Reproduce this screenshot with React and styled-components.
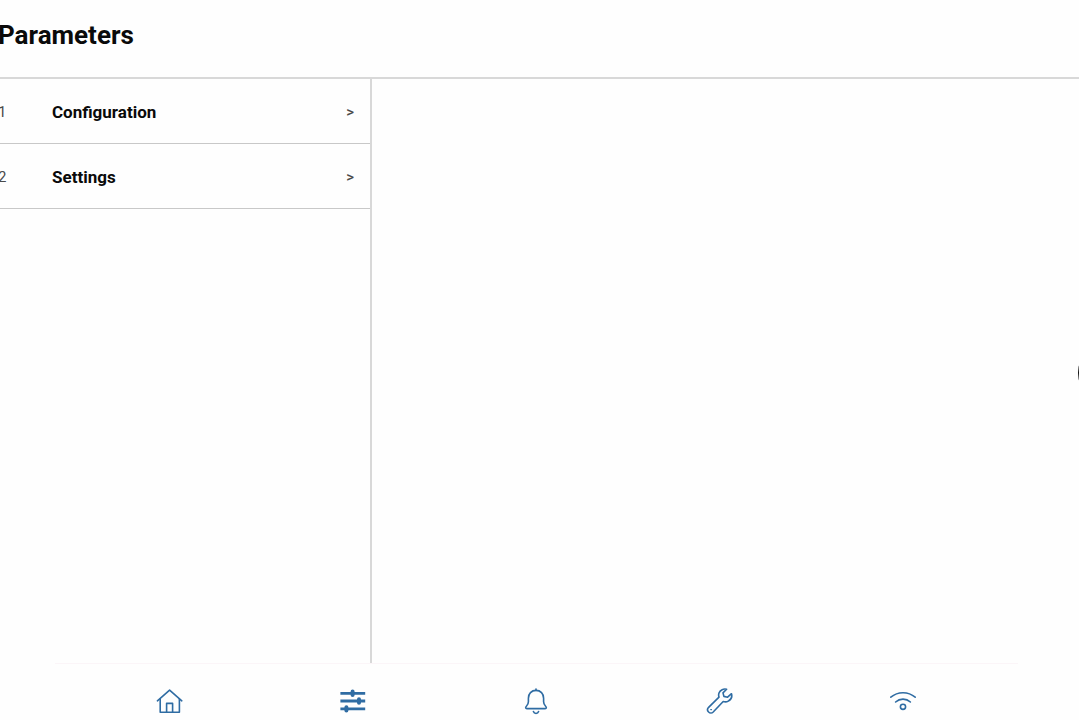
import { useState } from "react";
import styled, { ThemeProvider, createGlobalStyle } from "styled-components";

const theme = {
  bg: "#fefefe",
  text: "#0a0a0a",
  muted: "#4a4a4a",
  line: "#d8d8d8",
  rowLine: "#c8c8c8",
  navLine: "#fbf5f8",
  primary: "#2f6ca3",
};

const sections = [
  { id: 1, name: "Configuration" },
  { id: 2, name: "Settings" },
];

const links = [
  { id: "home", label: "Home", Icon: HomeIcon },
  { id: "parameters", label: "Parameters", Icon: SlidersIcon },
  { id: "alarms", label: "Alarms", Icon: BellIcon },
  { id: "tools", label: "Tools", Icon: WrenchIcon },
  { id: "network", label: "Network", Icon: WifiIcon },
];

function App() {
  const [selected, setSelected] = useState(null);
  return (
    <ThemeProvider theme={theme}>
      <GlobalStyles />
      <Screen>
        <Header>
          <Title>Parameters</Title>
        </Header>
        <Content>
          <Sidebar>
            {sections.map(({ id, name }) => (
              <Row
                key={id}
                type="button"
                aria-pressed={selected === id}
                onClick={() => setSelected(id)}
              >
                <RowNumber>{id}</RowNumber>
                <RowName>{name}</RowName>
                <RowArrow>&gt;</RowArrow>
              </Row>
            ))}
          </Sidebar>
          <Detail />
        </Content>
        <BottomNav>
          {links.map(({ id, label, Icon }) => (
            <NavLink key={id} href={`#${id}`} aria-label={label}>
              <Icon />
            </NavLink>
          ))}
        </BottomNav>
        <EdgeButton type="button" aria-label="Open panel" />
      </Screen>
    </ThemeProvider>
  );
}

function HomeIcon() {
  return (
    <NavIcon viewBox="0 0 28 28">
      <path d="M2.400 13.800 14.600 3.200l12.200 10.600" />
      <path d="M5.200 12v13.200h19.200V12" />
      <path d="M11.600 25.200v-8.800h6v8.800" />
    </NavIcon>
  );
}

function SlidersIcon() {
  return (
    <NavIcon viewBox="0 0 28 28">
      <path
        strokeWidth="2.8"
        strokeLinecap="butt"
        d="M2.400 6.300h24.800M2.400 14h24.800M2.400 21.900h24.800"
      />
      <path
        strokeWidth="4"
        d="M14.600 4.600v3.400M21 12.300v3.400M8.400 20.200v3.400"
      />
    </NavIcon>
  );
}

function BellIcon() {
  return (
    <NavIcon viewBox="0 0 28 28">
      <path d="M14 2v1.400" />
      <path d="M14 3.400c-4.600 0-7.600 3.300-7.600 7.800v3.600c0 2.200-.8 3.200-2 4.400-1.200 1.200-.9 2.400.5 2.400h18.200c1.400 0 1.700-1.200.5-2.400-1.200-1.200-2-2.200-2-4.400v-3.600c0-4.500-3-7.800-7.600-7.800Z" />
      <path d="M11.400 24.600c.4 1.200 1.400 1.900 2.600 1.900s2.200-.7 2.600-1.900" />
    </NavIcon>
  );
}

function WrenchIcon() {
  return (
    <NavIcon viewBox="0 0 28 28">
      <path d="M20.600 2.300c-3-.9-6.500.7-7.600 3.700-.5 1.400-.5 2.800 0 4.100L2.600 20.400c-1.300 1.300-1.300 3.300 0 4.600s3.300 1.300 4.600 0l10-10.500c1.600.6 3.500.5 5.100-.4 2.600-1.400 4-4.500 3.200-7.400l-3.900 3.500-3.700-.8-.9-3.500Z" />
      <circle cx="5" cy="22.700" r=".3" strokeWidth="1" />
    </NavIcon>
  );
}

function WifiIcon() {
  return (
    <NavIcon viewBox="0 0 28 28">
      <path d="M1.800 10.200c7-6 17.400-6 24.400 0" />
      <path d="M6.600 15c4.200-3.900 10.600-3.900 14.800 0" />
      <circle cx="14" cy="19.800" r="2.600" />
    </NavIcon>
  );
}

const GlobalStyles = createGlobalStyle`
  * {
    box-sizing: border-box;
  }
  body {
    margin: 0;
    overflow: hidden;
    background: ${theme.bg};
    color: ${theme.text};
    font-family: Roboto, "Liberation Sans", sans-serif;
  }
`;

const Screen = styled.div`
  display: flex;
  flex-direction: column;
  min-height: 100vh;
`;

/* header and list start slightly outside the window */
const Header = styled.header`
  display: flex;
  align-items: center;
  height: 79px;
  margin-left: -2px;
  padding-bottom: 7px;
  border-bottom: 2px solid ${({ theme }) => theme.line};
`;

const Title = styled.h1`
  margin: 0;
  font-size: 26px;
  line-height: 32px;
  font-weight: 700;
`;

const Content = styled.main`
  flex: 1;
  display: grid;
  grid-template-columns: 374px 1fr;
  margin-left: -2px;
`;

const Sidebar = styled.section`
  border-right: 2px solid ${({ theme }) => theme.line};
`;

const Detail = styled.section`
  min-width: 0;
`;

const Row = styled.button`
  display: grid;
  grid-template-columns: 54px 1fr auto;
  align-items: center;
  width: 100%;
  height: 65px;
  padding: 2px 16px 0 0;
  border: 0;
  border-bottom: 1px solid ${({ theme }) => theme.rowLine};
  background: none;
  color: inherit;
  font: inherit;
  text-align: left;
  cursor: pointer;
`;

const RowNumber = styled.span`
  font-size: 15px;
  color: ${({ theme }) => theme.muted};
`;

const RowName = styled.span`
  font-size: 17px;
  font-weight: 700;
`;

const RowArrow = styled.span`
  font-size: 15px;
  font-weight: 500;
  color: ${({ theme }) => theme.muted};
`;

const BottomNav = styled.nav`
  display: flex;
  height: 57px;
  margin: 0 61px 0 55px;
  padding: 0 23px 0 22px;
  border-top: 1px solid ${({ theme }) => theme.navLine};
`;

const NavLink = styled.a`
  flex: 1;
  display: flex;
  justify-content: center;
  padding-top: 23px;
  color: ${({ theme }) => theme.primary};
`;

const NavIcon = styled.svg.attrs({ "aria-hidden": true })`
  width: 28px;
  height: 28px;
  fill: none;
  stroke: currentColor;
  stroke-width: 1.6;
  stroke-linecap: round;
  stroke-linejoin: round;
`;

/* round handle, only its left edge is inside the window */
const EdgeButton = styled.button`
  position: fixed;
  top: 341px;
  right: -63px;
  width: 64px;
  height: 64px;
  padding: 0;
  border: 0;
  border-radius: 50%;
  background: #111;
`;

export default App;
